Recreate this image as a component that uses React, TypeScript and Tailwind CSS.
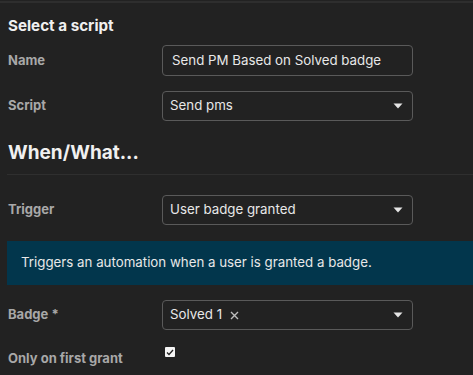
import React from "react";

function Caret() {
  return (
    <svg width="10" height="6" viewBox="0 0 10 6" className="shrink-0">
      <path d="M0.5 0.5 L9.5 0.5 L5 5.5 Z" fill="#e5e5e5" />
    </svg>
  );
}

function Row({ label, children }: { label: string; children: React.ReactNode }) {
  return (
    <div className="flex items-center">
      <div className="w-[154px] shrink-0 text-[13px] font-bold text-[#a8a8a8]">{label}</div>
      {children}
    </div>
  );
}

function Select({ value, chip }: { value: string; chip?: boolean }) {
  return (
    <div className="flex h-[30px] w-[251px] items-center justify-between rounded-[4px] border border-[#5a5a5a] bg-[#222222] pl-[7px] pr-[9px] text-[13.3px] text-[#e8e8e8]">
      {chip ? (
        <span className="flex items-center gap-[8px]">
          Solved 1
          <svg width="9" height="9" viewBox="0 0 9 9">
            <path d="M1 1 L8 8 M8 1 L1 8" stroke="#bdbdbd" strokeWidth="1.4" />
          </svg>
        </span>
      ) : (
        <span>{value}</span>
      )}
      <Caret />
    </div>
  );
}

export default function App() {
  return (
    <div
      className="h-[375px] w-[473px] overflow-hidden bg-[#222222] text-[#e8e8e8]"
      style={{ fontFamily: "Inter, 'Noto Sans', sans-serif" }}
    >
      <div className="mt-[1px] h-[2px] w-full bg-[#2e2e2e]" />

      <div className="pl-[8px]">
        {/* Select a script */}
        <h2 className="mt-[13px] text-[15.2px] font-bold leading-[20px] text-[#f0f0f0]">Select a script</h2>

        <div className="mt-[9px] flex flex-col gap-[15px]">
          <Row label="Name">
            <div className="flex h-[31px] w-[251px] items-center rounded-[4px] border border-[#5a5a5a] bg-[#222222] px-[9px] text-[13.3px] text-[#e8e8e8]">
              Send PM Based on Solved badge
            </div>
          </Row>
          <Row label="Script">
            <Select value="Send pms" />
          </Row>
        </div>

        {/* When/What */}
        <h2 className="mt-[19px] text-[19px] font-bold leading-[26px] text-[#f0f0f0]">When/What...</h2>
        <div className="ml-[-1px] mt-[8px] h-[1px] bg-[#2f2f2f]" />

        <div className="mt-[20px]">
          <Row label="Trigger">
            <Select value="User badge granted" />
          </Row>
        </div>
      </div>

      <div className="ml-[7px] mt-[16px] flex h-[44px] items-center bg-[#02364c] pl-[14px] text-[13.3px] text-[#e8e8e8]">
        Triggers an automation when a user is granted a badge.
      </div>

      <div className="pl-[8px]">
        <div className="mt-[15px]">
          <Row label="Badge *">
            <Select value="" chip />
          </Row>
        </div>

        <div className="mt-[17px] flex items-start">
          <div className="w-[157px] shrink-0 pt-[3px] text-[13px] font-bold leading-[16px] text-[#a8a8a8]">
            Only on first grant
          </div>
          <div className="flex h-[10px] w-[10px] items-center justify-center rounded-[1px] bg-[#f5f5f5]">
            <svg width="8" height="7" viewBox="0 0 8 7">
              <path d="M1 3.5 L3 5.5 L7 1" stroke="#222" strokeWidth="1.3" fill="none" />
            </svg>
          </div>
        </div>
      </div>
    </div>
  );
}
